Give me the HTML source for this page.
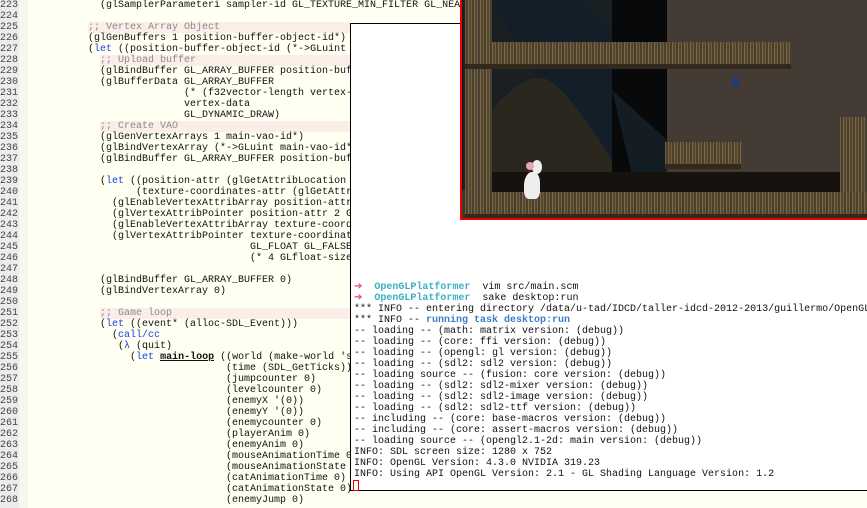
<!DOCTYPE html>
<html><head><meta charset="utf-8"><style>
*{margin:0;padding:0;box-sizing:border-box}
body{width:867px;height:508px;overflow:hidden;background:#fffff2;position:relative;font-family:"Liberation Mono",monospace;font-size:10px;}
#gut{position:absolute;left:0;top:0;width:19px;height:508px;background:#ececea;}
#gut2{position:absolute;left:19px;top:0;width:9px;height:508px;background:#f7f7ec;}
.ln{position:absolute;left:0;height:11px;line-height:11px;color:#444;white-space:pre;margin-top:2px}
.cl{position:absolute;left:28px;height:11px;line-height:11px;color:#111;white-space:pre;margin-top:2px}
.cm{color:#8a8a8a;}
.cbg{position:absolute;height:11px;background:#fbeee9;margin-top:2px}
.k{color:#1a3ee8}
.b{font-weight:bold;text-decoration:underline}
#game{position:absolute;left:460px;top:0;width:407px;height:220px;background:#3e3731;border-left:2px solid #e00;border-bottom:2px solid #e00;overflow:hidden}
.t{position:absolute;background:repeating-linear-gradient(90deg,#6e5e42 0 1px,#4a3e2c 1px 3px,#7a6848 3px 4px,#564830 4px 6px);}
.t:after{content:"";position:absolute;left:0;right:0;bottom:0;height:5px;background:#33281c}
#term{position:absolute;left:350px;top:23px;width:518px;height:468px;background:#fff;border:1px solid #000;}
.tl{position:absolute;left:3px;height:11px;line-height:11px;white-space:pre;color:#111;margin-top:2px}
.ar{color:#e8446a}.cy{color:#3ab0c0;font-weight:bold}.bl{color:#3a80c8;font-weight:bold}
</style></head><body>
<div id="gut"></div><div id="gut2"></div>
<div class="cbg" style="left:88px;top:20px;width:262px"></div>
<div class="cbg" style="left:100px;top:53px;width:250px"></div>
<div class="cbg" style="left:100px;top:119px;width:250px"></div>
<div class="cbg" style="left:100px;top:306px;width:250px"></div>
<div class="ln" style="top:-2px">223</div><div class="cl" style="top:-2px">            (glSamplerParameteri sampler-id GL_TEXTURE_MIN_FILTER GL_NEAREST)</div>
<div class="ln" style="top:9px">224</div>
<div class="ln" style="top:20px">225</div><div class="cl cm" style="top:20px">          ;; Vertex Array Object</div>
<div class="ln" style="top:31px">226</div><div class="cl" style="top:31px">          (glGenBuffers 1 position-buffer-object-id*)</div>
<div class="ln" style="top:42px">227</div><div class="cl" style="top:42px">          (<span class="k">let</span> ((position-buffer-object-id (*-&gt;GLuint</div>
<div class="ln" style="top:53px">228</div><div class="cl cm" style="top:53px">            ;; Upload buffer</div>
<div class="ln" style="top:64px">229</div><div class="cl" style="top:64px">            (glBindBuffer GL_ARRAY_BUFFER position-buffer</div>
<div class="ln" style="top:75px">230</div><div class="cl" style="top:75px">            (glBufferData GL_ARRAY_BUFFER</div>
<div class="ln" style="top:86px">231</div><div class="cl" style="top:86px">                          (* (f32vector-length vertex-</div>
<div class="ln" style="top:97px">232</div><div class="cl" style="top:97px">                          vertex-data</div>
<div class="ln" style="top:108px">233</div><div class="cl" style="top:108px">                          GL_DYNAMIC_DRAW)</div>
<div class="ln" style="top:119px">234</div><div class="cl cm" style="top:119px">            ;; Create VAO</div>
<div class="ln" style="top:130px">235</div><div class="cl" style="top:130px">            (glGenVertexArrays 1 main-vao-id*)</div>
<div class="ln" style="top:141px">236</div><div class="cl" style="top:141px">            (glBindVertexArray (*-&gt;GLuint main-vao-id*</div>
<div class="ln" style="top:152px">237</div><div class="cl" style="top:152px">            (glBindBuffer GL_ARRAY_BUFFER position-buff</div>
<div class="ln" style="top:163px">238</div>
<div class="ln" style="top:174px">239</div><div class="cl" style="top:174px">            (<span class="k">let</span> ((position-attr (glGetAttribLocation</div>
<div class="ln" style="top:185px">240</div><div class="cl" style="top:185px">                  (texture-coordinates-attr (glGetAttr</div>
<div class="ln" style="top:196px">241</div><div class="cl" style="top:196px">              (glEnableVertexAttribArray position-attr</div>
<div class="ln" style="top:207px">242</div><div class="cl" style="top:207px">              (glVertexAttribPointer position-attr 2 G</div>
<div class="ln" style="top:218px">243</div><div class="cl" style="top:218px">              (glEnableVertexAttribArray texture-coord</div>
<div class="ln" style="top:229px">244</div><div class="cl" style="top:229px">              (glVertexAttribPointer texture-coordinat</div>
<div class="ln" style="top:240px">245</div><div class="cl" style="top:240px">                                     GL_FLOAT GL_FALSE</div>
<div class="ln" style="top:251px">246</div><div class="cl" style="top:251px">                                     (* 4 GLfloat-size</div>
<div class="ln" style="top:262px">247</div>
<div class="ln" style="top:273px">248</div><div class="cl" style="top:273px">            (glBindBuffer GL_ARRAY_BUFFER 0)</div>
<div class="ln" style="top:284px">249</div><div class="cl" style="top:284px">            (glBindVertexArray 0)</div>
<div class="ln" style="top:295px">250</div>
<div class="ln" style="top:306px">251</div><div class="cl cm" style="top:306px">            ;; Game loop</div>
<div class="ln" style="top:317px">252</div><div class="cl" style="top:317px">            (<span class="k">let</span> ((event* (alloc-SDL_Event)))</div>
<div class="ln" style="top:328px">253</div><div class="cl" style="top:328px">              (<span class="k">call/cc</span></div>
<div class="ln" style="top:339px">254</div><div class="cl" style="top:339px">               (<span class="k">λ</span> (quit)</div>
<div class="ln" style="top:350px">255</div><div class="cl" style="top:350px">                 (<span class="k">let</span> <span class="b">main-loop</span> ((world (make-world 's</div>
<div class="ln" style="top:361px">256</div><div class="cl" style="top:361px">                                 (time (SDL_GetTicks))</div>
<div class="ln" style="top:372px">257</div><div class="cl" style="top:372px">                                 (jumpcounter 0)</div>
<div class="ln" style="top:383px">258</div><div class="cl" style="top:383px">                                 (levelcounter 0)</div>
<div class="ln" style="top:394px">259</div><div class="cl" style="top:394px">                                 (enemyX '(0))</div>
<div class="ln" style="top:405px">260</div><div class="cl" style="top:405px">                                 (enemyY '(0))</div>
<div class="ln" style="top:416px">261</div><div class="cl" style="top:416px">                                 (enemycounter 0)</div>
<div class="ln" style="top:427px">262</div><div class="cl" style="top:427px">                                 (playerAnim 0)</div>
<div class="ln" style="top:438px">263</div><div class="cl" style="top:438px">                                 (enemyAnim 0)</div>
<div class="ln" style="top:449px">264</div><div class="cl" style="top:449px">                                 (mouseAnimationTime 0</div>
<div class="ln" style="top:460px">265</div><div class="cl" style="top:460px">                                 (mouseAnimationState</div>
<div class="ln" style="top:471px">266</div><div class="cl" style="top:471px">                                 (catAnimationTime 0)</div>
<div class="ln" style="top:482px">267</div><div class="cl" style="top:482px">                                 (catAnimationState 0)</div>
<div class="ln" style="top:493px">268</div><div class="cl" style="top:493px">                                 (enemyJump 0)</div>

<div id="term">
<div class="tl" style="top:256px"><span class="ar">➔</span>  <span class="cy">OpenGLPlatformer</span>  vim src/main.scm</div>
<div class="tl" style="top:267px"><span class="ar">➔</span>  <span class="cy">OpenGLPlatformer</span>  sake desktop:run</div>
<div class="tl" style="top:278px">*** INFO -- entering directory /data/u-tad/IDCD/taller-idcd-2012-2013/guillermo/OpenGL</div>
<div class="tl" style="top:289px">*** INFO -- <span class="bl">running task desktop:run</span></div>
<div class="tl" style="top:300px">-- loading -- (math: matrix version: (debug))</div>
<div class="tl" style="top:311px">-- loading -- (core: ffi version: (debug))</div>
<div class="tl" style="top:322px">-- loading -- (opengl: gl version: (debug))</div>
<div class="tl" style="top:333px">-- loading -- (sdl2: sdl2 version: (debug))</div>
<div class="tl" style="top:344px">-- loading source -- (fusion: core version: (debug))</div>
<div class="tl" style="top:355px">-- loading -- (sdl2: sdl2-mixer version: (debug))</div>
<div class="tl" style="top:366px">-- loading -- (sdl2: sdl2-image version: (debug))</div>
<div class="tl" style="top:377px">-- loading -- (sdl2: sdl2-ttf version: (debug))</div>
<div class="tl" style="top:388px">-- including -- (core: base-macros version: (debug))</div>
<div class="tl" style="top:399px">-- including -- (core: assert-macros version: (debug))</div>
<div class="tl" style="top:410px">-- loading source -- (opengl2.1-2d: main version: (debug))</div>
<div class="tl" style="top:421px">INFO: SDL screen size: 1280 x 752</div>
<div class="tl" style="top:432px">INFO: OpenGL Version: 4.3.0 NVIDIA 319.23</div>
<div class="tl" style="top:443px">INFO: Using API OpenGL Version: 2.1 - GL Shading Language Version: 1.2</div>
<div style="position:absolute;left:2px;top:456px;width:6px;height:11px;border:1px solid #e00"></div>
</div>

<div id="game">
<svg width="407" height="220" style="position:absolute;left:0;top:0">
<rect x="0" y="0" width="205" height="190" fill="#1a1f22"/>
<rect x="205" y="0" width="202" height="175" fill="#433b34"/>
<polygon points="30,0 120,0 150,30 150,175 130,175" fill="#141e28"/>
<path d="M30,190 L30,110 Q60,75 80,78 Q100,80 150,160 L150,190 Z" fill="#2a281e"/>
<polygon points="150,0 205,0 205,175 150,175" fill="#07090b"/>
<polygon points="150,90 205,140 205,175 170,175" fill="#141c24"/>
</svg>
<div style="position:absolute;left:30px;top:172px;width:380px;height:20px;background:#16130f"></div>
<div class="t" style="left:3px;top:0;width:27px;height:200px"></div>
<div class="t" style="left:3px;top:42px;width:326px;height:27px"></div>
<div class="t" style="left:203px;top:142px;width:76px;height:27px"></div>
<div class="t" style="left:378px;top:117px;width:30px;height:80px"></div>
<div class="t" style="left:3px;top:192px;width:405px;height:27px"></div>
<div style="position:absolute;left:270px;top:77px;width:7px;height:10px;background:#1e3a80;border-radius:50% 50% 45% 45%"></div>
<div style="position:absolute;left:62px;top:172px;width:16px;height:27px;background:#eee;border-radius:50% 40% 30% 30%"></div>
<div style="position:absolute;left:70px;top:160px;width:10px;height:14px;background:#eee;border-radius:50%"></div>
<div style="position:absolute;left:64px;top:162px;width:8px;height:8px;background:#f0a0c0;border-radius:50%"></div>
</div>
</body></html>
